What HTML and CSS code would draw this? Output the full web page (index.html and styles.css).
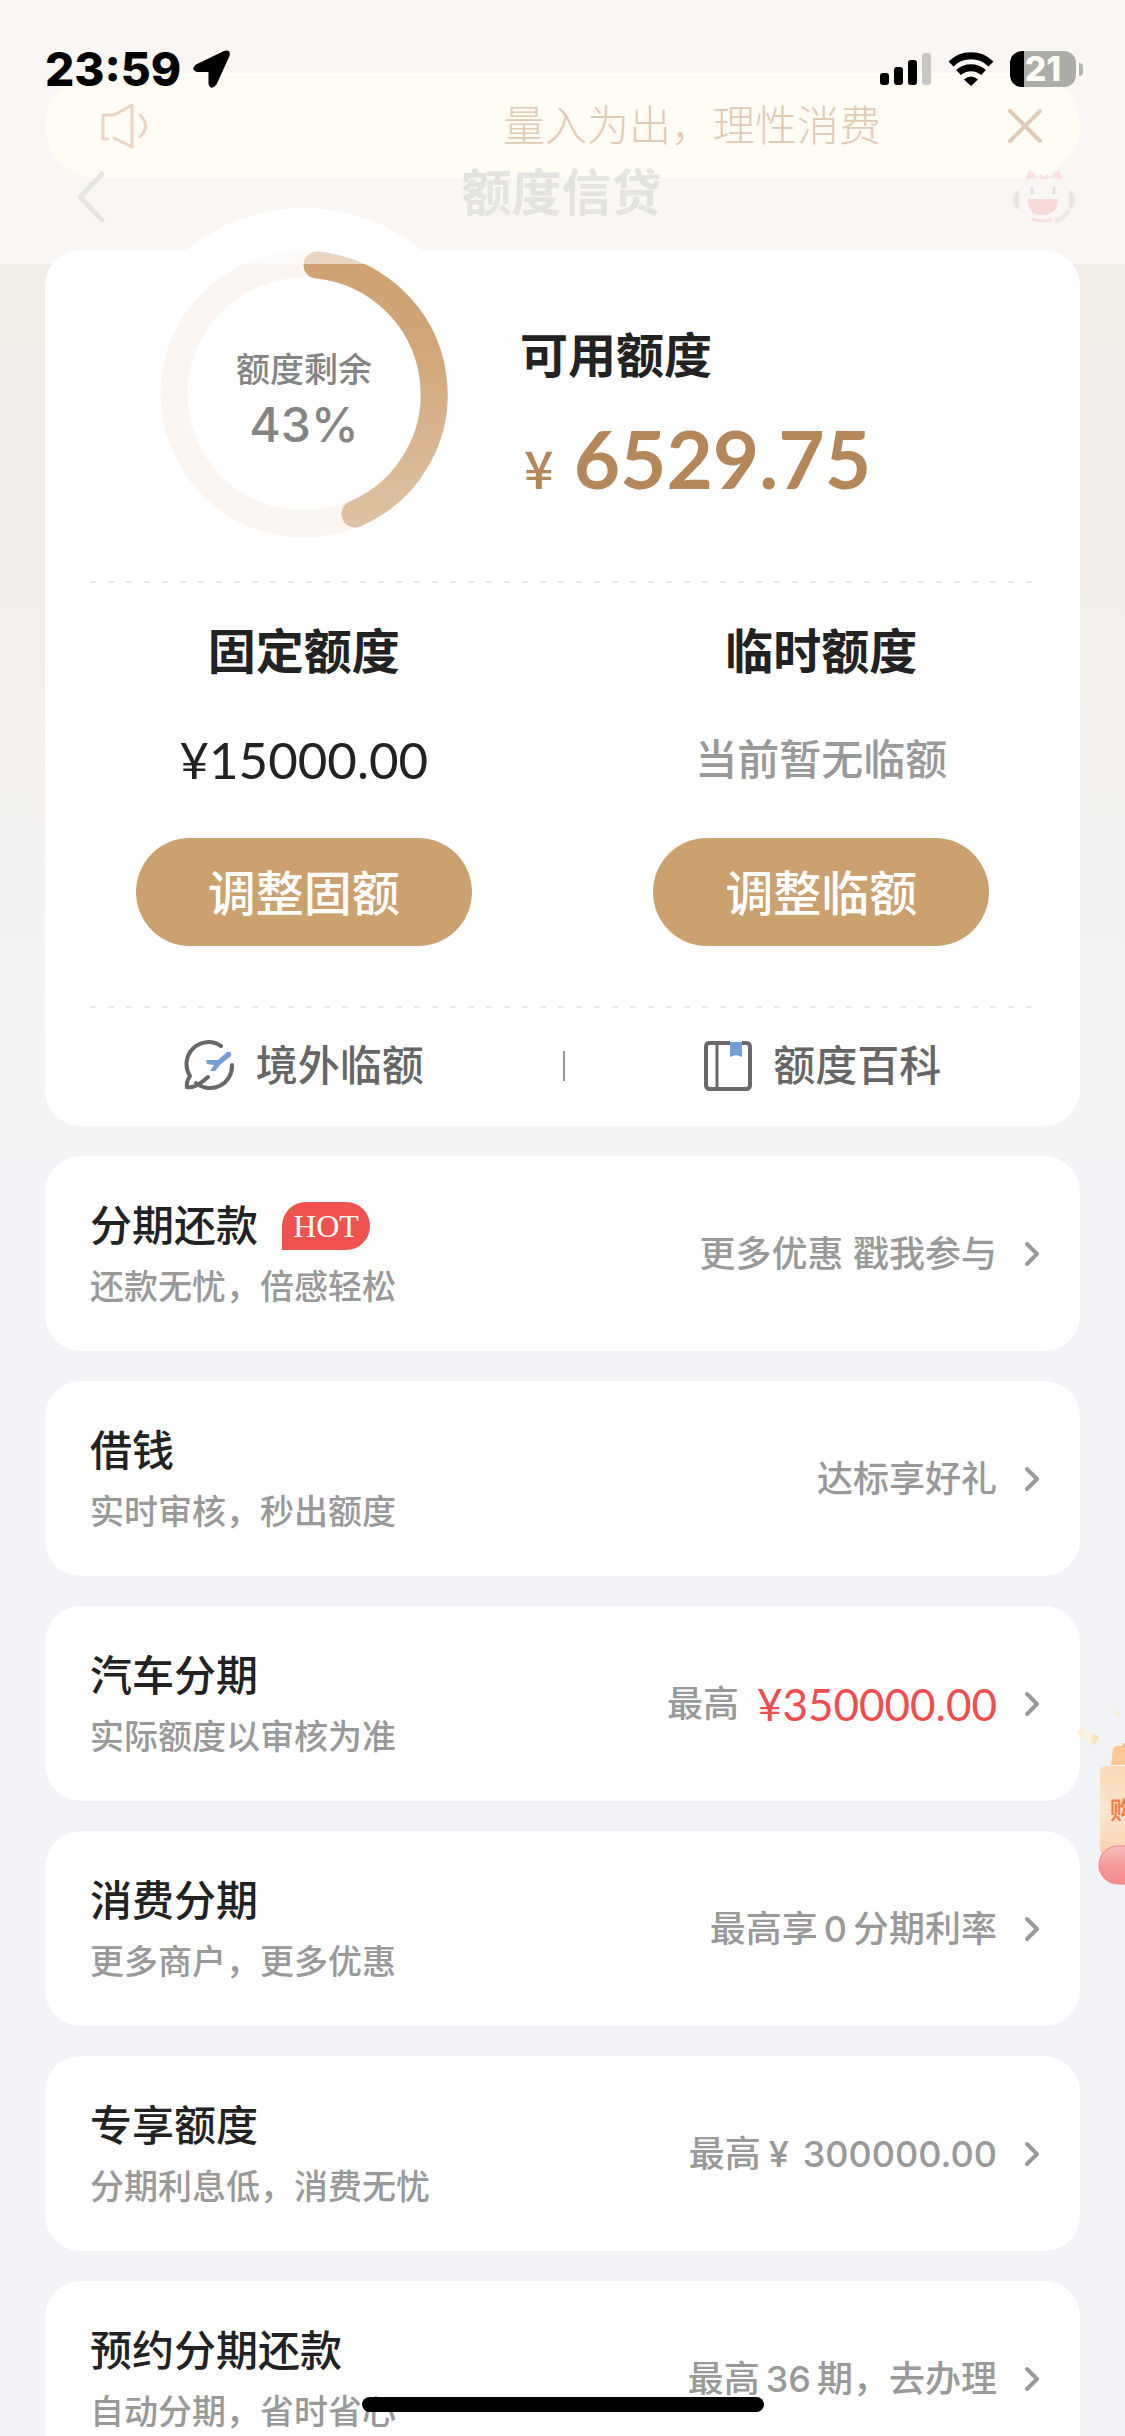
FILE: index.html
```html
<!DOCTYPE html>
<html lang="zh-CN">
<head>
<meta charset="utf-8">
<meta name="viewport" content="width=device-width, initial-scale=1">
<title>额度信贷</title>
<link rel="stylesheet" href="styles.css">
</head>
<body>
<div class="screen">
  <header class="header">
    <div class="status">
      <div class="status-side">
        <span class="clock">23:59</span>
        <svg class="locate" viewBox="0 0 38 38" aria-hidden="true"><path d="M3 14.500 31 1 Q38 -1 36.500 6 L23.500 34.500 Q18 41 15.500 34 V22 H4 Q-3 20 3 14.500Z"/></svg>
      </div>
      <div class="status-side status-icons">
        <svg class="signal" viewBox="0 0 52 34" aria-hidden="true"><rect x="0" y="21" width="9" height="12" rx="3"/><rect x="14" y="15" width="9" height="18" rx="3"/><rect x="28" y="8" width="9" height="25" rx="3"/><rect x="42" y="1" width="9" height="32" rx="3" fill="#c6c6c2"/></svg>
        <svg class="wifi" viewBox="0 0 46 34" aria-hidden="true"><path d="M3 12C14 1 32 1 43 12" fill="none" stroke="#000" stroke-width="7"/><path d="M10.500 20.500C17.500 14 28.500 14 35.500 20.500" fill="none" stroke="#000" stroke-width="7"/><path d="M23 34 16 27.500Q23 21.500 30 27.500Z"/></svg>
        <span class="battery"><span class="battery-text">21</span></span>
      </div>
    </div>
    <div class="notice">
      <svg class="speaker" viewBox="0 0 48 46" aria-hidden="true"><g fill="none" stroke="#ebd5c1" stroke-width="3" stroke-linecap="round" stroke-linejoin="round"><path d="M7 36H2V12H13L31 2V44L13 35"/><path d="M39 12Q50 23 39 34"/></g></svg>
      <p class="notice-text">量入为出，理性消费</p>
      <button class="icon-button" aria-label="关闭"><svg class="close" viewBox="0 0 34 34" aria-hidden="true"><path d="M2 2 32 32M32 2 2 32" fill="none" stroke="#e2cbb5" stroke-width="4" stroke-linecap="round"/></svg></button>
    </div>
    <nav class="nav">
      <button class="icon-button" aria-label="返回"><svg class="back" viewBox="0 0 28 52" aria-hidden="true"><path d="M25 3 3 26 25 49" fill="none" stroke="#e3e3df" stroke-width="5" stroke-linecap="round" stroke-linejoin="round"/></svg></button>
      <h1 class="title">额度信贷</h1>
      <button class="icon-button" aria-label="客服"><svg class="robot" viewBox="0 0 64 56" aria-hidden="true">
        <path d="M14 10 18 2 25 9M39 9 46 2 50 10" fill="#fadfe1" stroke="#fadfe1" stroke-width="2" stroke-linejoin="round"/>
        <rect x="8" y="8" width="48" height="44" rx="21" fill="#f9f6f5" stroke="#f4f1ef" stroke-width="1"/>
        <path d="M26 8Q32 13 38 8L35 5 32 8 29 5Z" fill="#fadfe1"/>
        <path d="M7 21Q1 24 1 31T7 41ZM57 21Q63 24 63 31T57 41Z" fill="#e8e6e3"/>
        <path d="M57 41Q53 49 43 52" fill="none" stroke="#ebe9e6" stroke-width="5"/>
        <path d="M20 19V24M42 19V24" stroke="#e3dfdd" stroke-width="3" stroke-linecap="round"/>
        <path d="M16 30H46Q46 45 31 46T16 30Z" fill="#f8dad9"/>
        <path d="M20 50Q30 54 40 50" fill="none" stroke="#fadfe1" stroke-width="3"/>
      </svg></button>
    </nav>
  </header>

  <main class="content">
    <section class="card quota">
      <div class="overview">
        <div class="gauge">
          <svg class="gauge-ring" viewBox="0 0 372 372" aria-hidden="true">
            <defs><linearGradient id="arc" gradientUnits="userSpaceOnUse" x1="0" y1="56" x2="0" y2="320"><stop offset="0" stop-color="#cfa273"/><stop offset=".3" stop-color="#d0a578"/><stop offset="1" stop-color="#dfc3a5"/></linearGradient></defs>
            <circle cx="186" cy="186" r="186" fill="#fff"/>
            <circle cx="186" cy="186" r="130" fill="none" stroke="#faf5f1" stroke-width="27"/>
            <path d="M199 57A130 130 0 0 1 237 306" fill="none" stroke="url(#arc)" stroke-width="27" stroke-linecap="round"/>
          </svg>
          <div class="gauge-label"><span class="gauge-name">额度剩余</span><span class="gauge-value">43%</span></div>
        </div>
        <div class="available">
          <h2 class="heading">可用额度</h2>
          <p class="available-sum"><span class="currency">¥</span><span class="sum">6529.75</span></p>
        </div>
      </div>
      <div class="limits">
        <div class="limit">
          <h2 class="heading">固定额度</h2>
          <p class="limit-sum">¥15000.00</p>
          <button class="pill">调整固额</button>
        </div>
        <div class="limit">
          <h2 class="heading">临时额度</h2>
          <p class="limit-none">当前暂无临额</p>
          <button class="pill">调整临额</button>
        </div>
      </div>
      <div class="links">
        <a class="link" href="#abroad"><svg class="link-icon" viewBox="0 0 52 52" aria-hidden="true"><g fill="none" stroke="#686868" stroke-width="4" stroke-linecap="round"><path d="M37 6A22 22 0 0 0 6 36Q2 42 3 47 11 49 24 37"/><path d="M48 25A22 22 0 0 1 12 43"/></g><path d="M43 12Q48 11 47 16L37 24 31 31 26 31 30 25 23 24 22 20 34 20Z" fill="#739fd6"/></svg>境外临额</a>
        <a class="link" href="#wiki"><svg class="link-icon" viewBox="0 0 52 52" aria-hidden="true"><path d="M29 2H41V17L35 15 29 17Z" fill="#739fd6"/><path d="M29 3H8Q5 3 5 7V45Q5 49 9 49H45Q49 49 49 45V7Q49 3 45 3H41" fill="none" stroke="#686868" stroke-width="4"/><path d="M16 3V49" stroke="#686868" stroke-width="3"/></svg>额度百科</a>
      </div>
    </section>

    <a class="card row" href="#repay">
      <span class="row-main"><span class="row-title">分期还款<span class="hot">HOT</span></span><span class="row-sub">还款无忧，倍感轻松</span></span>
      <span class="row-note">更多优惠 戳我参与</span>
      <svg class="chevron" viewBox="0 0 16 26" aria-hidden="true"><path d="M3 3 13 13 3 23"/></svg>
    </a>
    <a class="card row" href="#loan">
      <span class="row-main"><span class="row-title">借钱</span><span class="row-sub">实时审核，秒出额度</span></span>
      <span class="row-note">达标享好礼</span>
      <svg class="chevron" viewBox="0 0 16 26" aria-hidden="true"><path d="M3 3 13 13 3 23"/></svg>
    </a>
    <a class="card row" href="#car">
      <span class="row-main"><span class="row-title">汽车分期</span><span class="row-sub">实际额度以审核为准</span></span>
      <span class="row-note">最高<span class="row-sum">¥350000.00</span></span>
      <svg class="chevron" viewBox="0 0 16 26" aria-hidden="true"><path d="M3 3 13 13 3 23"/></svg>
    </a>
    <a class="card row" href="#consume">
      <span class="row-main"><span class="row-title">消费分期</span><span class="row-sub">更多商户，更多优惠</span></span>
      <span class="row-note">最高享<span class="digits">0</span>分期利率</span>
      <svg class="chevron" viewBox="0 0 16 26" aria-hidden="true"><path d="M3 3 13 13 3 23"/></svg>
    </a>
    <a class="card row" href="#exclusive">
      <span class="row-main"><span class="row-title">专享额度</span><span class="row-sub">分期利息低，消费无忧</span></span>
      <span class="row-note">最高<span class="money"><span>¥</span><span>300000.00</span></span></span>
      <svg class="chevron" viewBox="0 0 16 26" aria-hidden="true"><path d="M3 3 13 13 3 23"/></svg>
    </a>
    <a class="card row" href="#schedule">
      <span class="row-main"><span class="row-title">预约分期还款</span><span class="row-sub">自动分期，省时省心</span></span>
      <span class="row-note">最高<span class="digits">36</span>期，去办理</span>
      <svg class="chevron" viewBox="0 0 16 26" aria-hidden="true"><path d="M3 3 13 13 3 23"/></svg>
    </a>
  </main>

  <a class="promo" href="#promo">
    <svg class="promo-art" viewBox="0 0 50 180" aria-hidden="true">
      <defs>
        <linearGradient id="bag" x1="0" y1="0" x2="0" y2="1"><stop offset="0" stop-color="#fbd9b6"/><stop offset=".5" stop-color="#fde5cf"/><stop offset="1" stop-color="#fbd0a6"/></linearGradient>
        <linearGradient id="ribbon" x1="0" y1="0" x2="0" y2="1"><stop offset="0" stop-color="#f8bdbd"/><stop offset=".6" stop-color="#f59496"/><stop offset="1" stop-color="#f38d90"/></linearGradient>
        <linearGradient id="confetti" x1="0" y1="0" x2="1" y2="0"><stop offset="0" stop-color="#fdecc4"/><stop offset=".5" stop-color="#fbf5e8"/><stop offset="1" stop-color="#fbd9a0"/></linearGradient>
      </defs>
      <path d="M6 27 24 37 19 46 2 34Z" fill="url(#confetti)"/>
      <path d="M38 8 44 13 46 18 42 16Z" fill="#fbebcf"/>
      <path d="M36 65 38 49Q39 46 42 46H50V65Z" fill="#fbc795"/>
      <path d="M49 43H50V47H47Z" fill="#f7b070"/>
      <path d="M25 72Q25 66 31 66H50V160H28L25 150Z" fill="url(#bag)"/>
      <path d="M60 146H43A19 19 0 0 0 43 184H60Z" fill="url(#ribbon)" stroke="#ee7f82" stroke-width="1"/>
    </svg>
    <span class="promo-text">购</span>
  </a>
  <div class="home-bar"></div>
</div>
</body>
</html>
```
FILE: styles.css
```css
* { box-sizing: border-box; margin: 0; padding: 0; }

body {
  background: #f2f3f7;
  color: #222;
  font-family: Inter, "Noto Sans CJK SC", sans-serif;
}

button { border: 0; background: none; font: inherit; color: inherit; }
a { color: inherit; text-decoration: none; }
svg { display: block; flex: none; }

.screen {
  position: relative;
  height: 100vh;
  overflow: hidden;
  background: linear-gradient(#f1ece4, #f1ece7 500px, #f4f4f4 1050px, #f4f4f4 1155px, #f2f3f7 1155px);
}

.header {
  position: absolute;
  inset: 0 0 auto;
  z-index: 2;
  height: 264px;
  padding: 42px 45px 0;
  background: rgba(255, 255, 255, .55);
}

.status {
  position: relative;
  z-index: 1;
  display: flex;
  justify-content: space-between;
  align-items: center;
  height: 54px;
}
.status-side { display: flex; align-items: center; gap: 12px; }
.status-icons { gap: 16px; margin-right: -3px; }
.clock { font-size: 46px; line-height: 54px; font-weight: 800; color: #000; }
.locate { width: 38px; height: 38px; }
.signal { width: 52px; height: 34px; }
.wifi { width: 46px; height: 34px; }
.battery {
  position: relative;
  width: 66px;
  height: 36px;
  margin-right: 7px;
  border-radius: 12px;
  background: linear-gradient(90deg, #000 14px, #acaca9 14px);
  text-align: center;
}
.battery::after {
  content: "";
  position: absolute;
  left: 69px;
  top: 12px;
  width: 4px;
  height: 13px;
  border-radius: 0 4px 4px 0;
  background: #b5b5b2;
}
.battery-text { display: block; font-size: 34px; line-height: 36px; font-weight: 800; color: #fffdf5; }

.notice {
  display: flex;
  align-items: center;
  height: 105px;
  margin-top: -23px;
  padding: 0 38px 0 56px;
  border-radius: 53px;
  background: #fffcf4;
}
.speaker { width: 48px; height: 46px; }
.notice-text {
  flex: 1;
  padding-right: 127px;
  text-align: right;
  font-size: 42px;
  line-height: 60px;
  font-weight: 300;
  color: #e2cbb5;
}
.close { width: 34px; height: 34px; }

.nav {
  display: flex;
  align-items: center;
  justify-content: space-between;
  height: 60px;
  margin-top: -14px;
  padding: 6px 4px 0 32px;
}
.title { padding: 0 0 8px 6px; font-size: 50px; line-height: 50px; font-weight: 700; color: #e3e3df; }
.back { width: 28px; height: 52px; }
.robot { width: 64px; height: 56px; }

.content {
  display: flex;
  flex-direction: column;
  gap: 30px;
  padding: 250px 45px 0;
}

.card { border-radius: 36px; background: #fff; }

.overview {
  display: flex;
  align-items: center;
  gap: 74px;
  height: 331px;
  padding: 0 0 43px 115px;
}
.gauge {
  position: relative;
  width: 288px;
  height: 288px;
}
.gauge-ring {
  position: absolute;
  inset: -42px;
  width: 372px;
  height: 372px;
}
.gauge-label {
  position: relative;
  display: flex;
  flex-direction: column;
  align-items: center;
  justify-content: center;
  height: 100%;
  padding-top: 8px;
  color: #848484;
  font-weight: 500;
}
.gauge-name { font-size: 34px; line-height: 54px; }
.gauge-value { font-size: 48px; line-height: 56px; }

.heading { font-size: 48px; line-height: 60px; font-weight: 700; color: #222; }
.available { margin-left: -2px; padding-top: 52px; }
.available-sum {
  display: flex;
  align-items: baseline;
  gap: 20px;
  margin-top: 24px;
  padding-left: 4px;
  color: #b4875a;
  line-height: 96px;
}
.currency { font-family: "Noto Sans CJK SC", sans-serif; font-size: 52px; font-weight: 500; }
.sum { font-family: Lato, sans-serif; font-size: 80px; font-weight: 700; }

.limits, .links {
  display: grid;
  grid-template-columns: 1fr 1fr;
  position: relative;
}
.limits::before, .links::before {
  content: "";
  position: absolute;
  left: 45px;
  right: 45px;
  top: 0;
  height: 2px;
  background: repeating-linear-gradient(90deg, #e8e8e8 0 6px, transparent 6px 18px);
}
.limit {
  display: flex;
  flex-direction: column;
  align-items: center;
  gap: 48px;
  padding: 41px 0 60px;
}
.limit-sum { font-family: Lato, sans-serif; font-size: 51px; line-height: 60px; }
.limit-none { font-size: 42px; line-height: 60px; font-weight: 500; color: #999; }
.pill {
  width: 336px;
  height: 108px;
  padding-bottom: 4px;
  border-radius: 54px;
  background: #cca170;
  color: #fff;
  font-size: 48px;
  font-weight: 500;
}

.links { height: 120px; align-items: center; }
.links::after {
  content: "";
  position: absolute;
  left: 50%;
  top: 45px;
  width: 2px;
  height: 30px;
  background: #999;
}
.link {
  display: flex;
  align-items: center;
  justify-content: center;
  gap: 20px;
  font-size: 42px;
  line-height: 60px;
  font-weight: 500;
  color: #666;
}
.link-icon { width: 52px; height: 52px; }

.row {
  display: flex;
  align-items: center;
  height: 195px;
  flex: none;
  padding: 0 40px 0 45px;
}
.row-main { flex: 1; display: flex; flex-direction: column; gap: 6px; }
.row-title {
  display: flex;
  align-items: center;
  gap: 24px;
  font-size: 42px;
  line-height: 60px;
  font-weight: 500;
}
.row-sub { font-size: 34px; line-height: 50px; font-weight: 500; color: #999; }
.row-note {
  display: flex;
  align-items: center;
  white-space: pre;
  font-size: 36px;
  line-height: 54px;
  font-weight: 500;
  color: #999;
}
.row-sum { margin-left: 18px; font-family: Lato, sans-serif; font-size: 44px; font-weight: 400; color: #f04d4f; }
.digits { margin: 0 6px; }
.money { display: flex; gap: 14px; margin-left: 8px; }
.hot {
  width: 88px;
  height: 48px;
  border-radius: 24px 24px 24px 0;
  background: #ef5350;
  color: #fff;
  font: 400 32px/48px "Liberation Serif", serif;
  text-align: center;
}
.chevron { width: 16px; height: 26px; margin-left: 27px; fill: none; stroke: #999; stroke-width: 4; stroke-linecap: round; stroke-linejoin: round; }

/* Floating promotion, parked half off the right edge */
.promo {
  position: absolute;
  right: 0;
  top: 1700px;
  z-index: 1;
  width: 50px;
  height: 186px;
  overflow: hidden;
}
.promo-art { width: 50px; height: 180px; overflow: visible; }
.promo-text {
  position: absolute;
  left: 35px;
  top: 94px;
  font-size: 24px;
  line-height: 34px;
  font-weight: 700;
  color: #fb7f4a;
}

.home-bar {
  position: absolute;
  left: 50%;
  bottom: 24px;
  z-index: 3;
  width: 402px;
  height: 15px;
  margin-left: -201px;
  border-radius: 8px;
  background: #000;
}
```
